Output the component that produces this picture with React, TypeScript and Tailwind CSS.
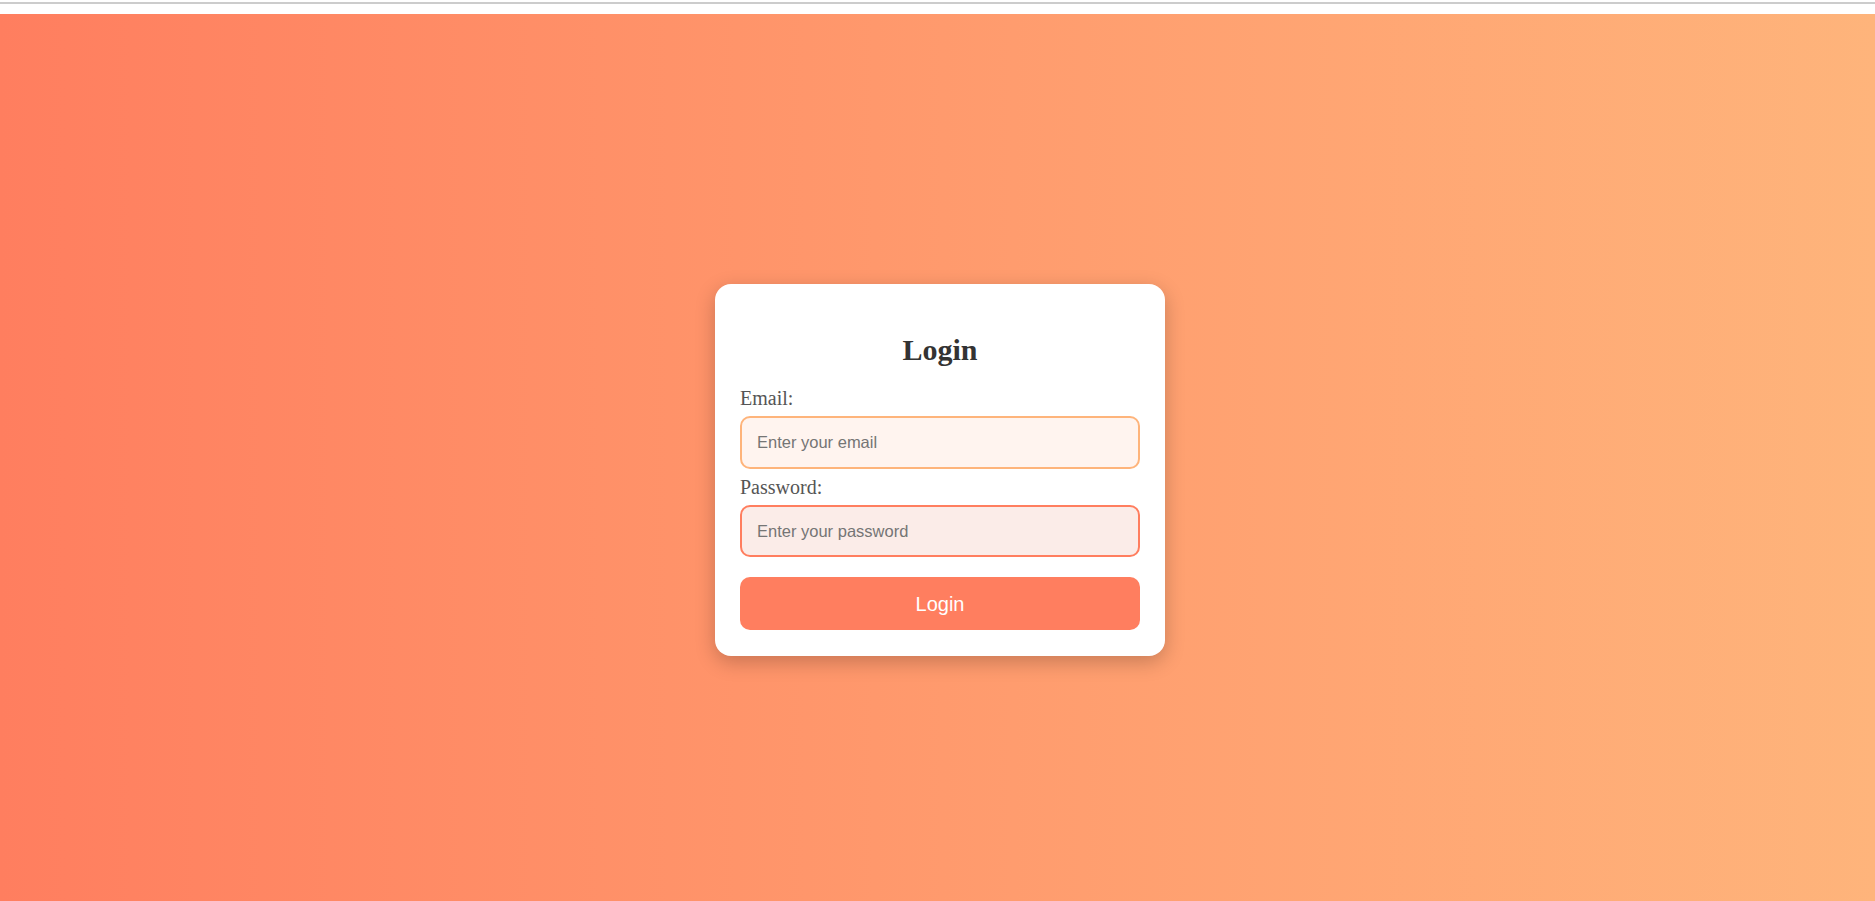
import React, { useState } from 'react';

const App = () => {
  const [email, setEmail] = useState('');
  const [password, setPassword] = useState('');

  return (
    <div className="w-full h-[901px] flex flex-col bg-white overflow-hidden">
      {/* top browser strip */}
      <div className="h-[14px] shrink-0 pt-[2px]">
        <div className="h-[2px] bg-[#cccccc]" />
      </div>

      <div className="flex-1 flex justify-center pt-[270px] pl-[5px] bg-gradient-to-r from-[#ff7e5f] to-[#feb47b]">
        <form
          className="w-[450px] h-[372px] bg-white rounded-[16px] px-[25px] pt-[49px] shadow-[0_6px_20px_rgba(0,0,0,0.22)]"
          onSubmit={(e) => e.preventDefault()}
        >
          <h2 className="text-center text-[30px] leading-[34px] font-bold text-[#333333] font-['Liberation_Serif',serif]">
            Login
          </h2>

          <label className="block mt-[20px] text-[20px] leading-[22px] text-[#555555] font-['Liberation_Serif',serif]">
            Email:
          </label>
          <input
            type="email"
            value={email}
            onChange={(e) => setEmail(e.target.value)}
            placeholder="Enter your email"
            className="block w-full h-[53px] mt-[6.7px] px-[15px] rounded-[10px] border-2 border-[#feb47b] bg-[#fff4ef] text-[16.5px] text-[#333] placeholder:text-[#757575] outline-none font-['Liberation_Sans',Arial,sans-serif]"
          />

          <label className="block mt-[7.3px] text-[20px] leading-[22px] text-[#555555] font-['Liberation_Serif',serif]">
            Password:
          </label>
          <input
            type="password"
            value={password}
            onChange={(e) => setPassword(e.target.value)}
            placeholder="Enter your password"
            className="block w-full h-[52px] mt-[7.4px] px-[15px] rounded-[10px] border-2 border-[#ff7e5f] bg-[#fbece8] text-[16.5px] text-[#333] placeholder:text-[#757575] outline-none font-['Liberation_Sans',Arial,sans-serif]"
          />

          <button
            type="submit"
            className="block w-full h-[53px] mt-[20px] rounded-[10px] bg-[#ff7e5f] text-white text-[20px] font-['Liberation_Sans',Arial,sans-serif]"
          >
            Login
          </button>
        </form>
      </div>
    </div>
  );
};

export default App;
